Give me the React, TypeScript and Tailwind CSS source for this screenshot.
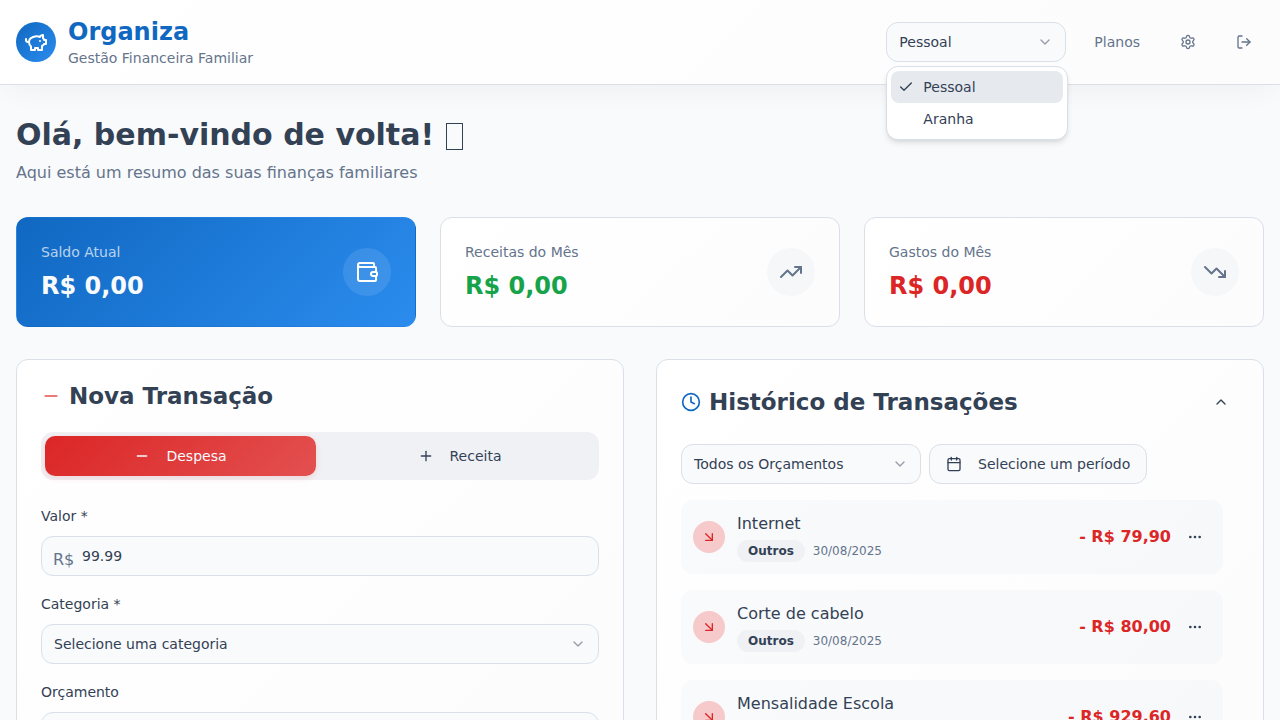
import { useState } from "react";
import type { ReactNode } from "react";
import {
  ArrowDownRight,
  Calendar,
  Check,
  ChevronDown,
  ChevronUp,
  Clock,
  Ellipsis,
  LogOut,
  Minus,
  Plus,
  Settings,
  TrendingDown,
  TrendingUp,
  Wallet,
} from "lucide-react";

const profiles = ["Pessoal", "Aranha"];

const transactions = [
  { title: "Internet", category: "Outros", date: "30/08/2025", amount: "- R$ 79,90" },
  { title: "Corte de cabelo", category: "Outros", date: "30/08/2025", amount: "- R$ 80,00" },
  { title: "Mensalidade Escola", category: "Outros", date: "30/08/2025", amount: "- R$ 929,60" },
];

const fieldClass =
  "h-10 w-full appearance-none rounded-xl border border-[#d9e0e8] bg-[#f9fafc] pl-3 pr-10 text-sm text-[#334155] outline-none";

const chevronClass = "pointer-events-none absolute top-3 right-[13px] size-4 text-[#334155] opacity-50";

function PiggyBankIcon() {
  return (
    <svg
      className="size-6"
      viewBox="0 0 24 24"
      fill="none"
      stroke="currentColor"
      strokeWidth="2"
      strokeLinecap="round"
      strokeLinejoin="round"
      aria-hidden="true"
    >
      <path d="M19 5c-1.5 0-2.8 1.4-3 2-3.5-1.5-11-.3-11 5 0 1.8 0 3 2 4.5V20h4v-2h3v2h4v-4c1-.5 1.7-1 2-2h2v-4h-2c0-1-.5-1.5-1-2V5z" />
      <path d="M2 9v1c0 1.1.9 2 2 2h1" />
      <path d="M16 11h.01" />
    </svg>
  );
}

function SelectField({ id, label, options }: { id: string; label?: string; options: string[] }) {
  return (
    <div className="relative">
      <select id={id} aria-label={label} className={fieldClass}>
        {options.map((option) => (
          <option key={option}>{option}</option>
        ))}
      </select>
      <ChevronDown className={chevronClass} />
    </div>
  );
}

function ProfileSelect() {
  const [open, setOpen] = useState(true);
  const [profile, setProfile] = useState(profiles[0]);
  return (
    <div className="relative w-[180px]">
      <select
        aria-label="Perfil"
        className={fieldClass}
        value={profile}
        onChange={(event) => setProfile(event.target.value)}
        onMouseDown={(event) => {
          event.preventDefault();
          setOpen(!open);
        }}
      >
        {profiles.map((name) => (
          <option key={name}>{name}</option>
        ))}
      </select>
      <ChevronDown className={chevronClass} />
      {open && (
        <div
          role="listbox"
          aria-label="Perfil"
          className="absolute top-11 left-0 z-20 w-[182px] rounded-xl border border-[#d9e0e8] bg-white p-1 shadow-md"
        >
          {profiles.map((name) => (
            <button
              key={name}
              type="button"
              role="option"
              aria-selected={name === profile}
              onClick={() => {
                setProfile(name);
                setOpen(false);
              }}
              className="flex h-8 w-full items-center gap-2.5 rounded-lg px-2 text-left text-sm text-[#334155] aria-selected:bg-[#e6e9ee]"
            >
              <span className="flex size-3.5 shrink-0 items-center justify-center">
                {name === profile && <Check className="size-4 shrink-0" />}
              </span>
              {name}
            </button>
          ))}
        </div>
      )}
    </div>
  );
}

function Header() {
  return (
    <header className="relative z-10 border-b border-[#d9e0e8] bg-linear-[135deg] from-white to-[#fcfcfd] shadow-[0_10px_30px_-10px_rgba(51,65,85,0.08)]">
      <div className="flex items-center justify-between p-4">
        <div className="flex items-center gap-3">
          <div className="flex size-10 items-center justify-center rounded-full bg-linear-[135deg] from-[#1068c1] to-[#2b8cee] text-white">
            <PiggyBankIcon />
          </div>
          <div>
            <p className="text-2xl font-bold text-[#1068c1]">Organiza</p>
            <p className="text-sm text-[#64748b]">Gestão Financeira Familiar</p>
          </div>
        </div>
        <nav className="flex items-center gap-4 text-[#64748b]">
          <ProfileSelect />
          <a href="#planos" className="px-3 text-sm">
            Planos
          </a>
          <button type="button" aria-label="Configurações" className="flex h-9 w-10 items-center justify-center">
            <Settings className="size-4" />
          </button>
          <button type="button" aria-label="Sair" className="flex h-9 w-10 items-center justify-center">
            <LogOut className="size-4" />
          </button>
        </nav>
      </div>
    </header>
  );
}

type SummaryProps = {
  label: string;
  value: string;
  icon: ReactNode;
  cardClass: string;
  labelClass: string;
  valueClass: string;
  iconClass: string;
};

const lightCard = "border-[#d9e0e8] bg-linear-[135deg] from-white to-[#fcfcfd]";

function SummaryCard({ label, value, icon, cardClass, labelClass, valueClass, iconClass }: SummaryProps) {
  return (
    <section className={`flex items-center justify-between rounded-xl border p-6 ${cardClass}`}>
      <div>
        <p className={`text-sm ${labelClass}`}>{label}</p>
        <p className={`mt-2 text-2xl font-bold ${valueClass}`}>{value}</p>
      </div>
      <div className={`flex size-12 items-center justify-center rounded-full ${iconClass}`}>{icon}</div>
    </section>
  );
}

function NewTransaction() {
  return (
    <section className={`rounded-xl border p-6 ${lightCard}`}>
      <h2 className="flex items-center gap-2 text-[23px] leading-6 font-bold">
        <Minus className="size-5 text-[#e14f4f]" />
        Nova Transação
      </h2>
      <div className="mt-6 grid grid-cols-2 gap-2 rounded-xl bg-[#f0f1f5] p-1 text-sm">
        <button
          type="button"
          className="flex h-10 items-center justify-center gap-4 rounded-[10px] bg-linear-[135deg] from-[#dc2626] to-[#e35050] text-[#f8fafc] shadow-[0_2px_6px_rgba(220,38,38,0.15)]"
        >
          <Minus className="size-4" />
          Despesa
        </button>
        <button type="button" className="flex h-10 items-center justify-center gap-4 rounded-[10px]">
          <Plus className="size-4" />
          Receita
        </button>
      </div>
      <form className="mt-6 flex flex-col gap-4">
        <div>
          <label htmlFor="valor" className="mb-2 block text-sm leading-6">
            Valor *
          </label>
          <div className="relative">
            <span className="absolute top-3 left-3 text-base text-[#64748b]">R$</span>
            <input
              id="valor"
              type="text"
              inputMode="decimal"
              placeholder="99.99"
              className="h-10 w-full rounded-xl border border-[#d9e0e8] bg-[#f9fafc] pr-3 pl-10 text-sm outline-none placeholder:text-[#334155]"
            />
          </div>
        </div>
        <div>
          <label htmlFor="categoria" className="mb-2 block text-sm leading-6">
            Categoria *
          </label>
          <SelectField id="categoria" options={["Selecione uma categoria", "Outros"]} />
        </div>
        <div>
          <label htmlFor="orcamento" className="mb-2 block text-sm leading-6">
            Orçamento
          </label>
          <SelectField id="orcamento" options={["Selecione um orçamento"]} />
        </div>
      </form>
    </section>
  );
}

function History() {
  return (
    <section className={`rounded-xl border p-6 ${lightCard}`}>
      <div className="flex items-center justify-between">
        <h2 className="flex items-center gap-2 text-[23px] leading-6 font-bold">
          <Clock className="size-5 text-[#1068c1]" />
          Histórico de Transações
        </h2>
        <button type="button" aria-label="Recolher histórico" className="flex size-9 items-center justify-center">
          <ChevronUp className="size-4" />
        </button>
      </div>
      <div className="mt-6 flex gap-2">
        <div className="w-60">
          <SelectField id="filtro-orcamento" label="Orçamentos" options={["Todos os Orçamentos"]} />
        </div>
        <button
          type="button"
          className="flex h-10 items-center gap-4 rounded-xl border border-[#d9e0e8] bg-[#f9fafc] px-4 text-sm"
        >
          <Calendar className="size-4" />
          Selecione um período
        </button>
      </div>
      <ul className="mt-4 flex flex-col gap-4 pr-4">
        {transactions.map((item) => (
          <li key={item.title} className="flex items-center gap-3 rounded-xl bg-linear-[135deg] from-[#f9fafc] to-[#f7f8fa] p-3">
            <div className="flex size-8 items-center justify-center rounded-full bg-[#f6c9cb] text-[#dc2626]">
              <ArrowDownRight className="size-4" />
            </div>
            <div className="flex flex-1 flex-col gap-1">
              <p>{item.title}</p>
              <div className="flex items-center gap-2 text-xs">
                <span className="rounded-full border border-transparent bg-[#f0f1f5] px-2.5 py-0.5 font-bold">
                  {item.category}
                </span>
                <span className="text-[#64748b]">{item.date}</span>
              </div>
            </div>
            <div className="flex items-center gap-2">
              <span className="font-bold text-[#dc2626]">{item.amount}</span>
              <button
                type="button"
                aria-label={`Opções de ${item.title}`}
                className="flex size-8 items-center justify-center"
              >
                <Ellipsis className="size-4" />
              </button>
            </div>
          </li>
        ))}
      </ul>
    </section>
  );
}

export default function App() {
  return (
    <div className="min-h-screen bg-[#f9fafc] font-['DejaVu_Sans',sans-serif] text-[#334155]">
      <Header />
      <main className="px-4 py-8">
        <h1 className="text-3xl font-bold">
          Olá, bem-vindo de volta!{" "}
          <span className="ml-px inline-block h-[27px] w-[17px] border border-[#334155] align-[-5px]" aria-hidden="true" />
        </h1>
        <p className="mt-2 text-[#64748b]">Aqui está um resumo das suas finanças familiares</p>
        <div className="mt-8 grid gap-6 md:grid-cols-3">
          <SummaryCard
            label="Saldo Atual"
            value="R$ 0,00"
            icon={<Wallet className="size-6" />}
            cardClass="border-transparent bg-linear-[135deg] from-[#1068c1] to-[#2b8cee]"
            labelClass="text-white/70"
            valueClass="text-[#f8fafc]"
            iconClass="bg-white/10 text-white"
          />
          <SummaryCard
            label="Receitas do Mês"
            value="R$ 0,00"
            icon={<TrendingUp className="size-6" />}
            cardClass={lightCard}
            labelClass="text-[#64748b]"
            valueClass="text-[#16a34a]"
            iconClass="bg-[#f5f7f9] text-[#64748b]"
          />
          <SummaryCard
            label="Gastos do Mês"
            value="R$ 0,00"
            icon={<TrendingDown className="size-6" />}
            cardClass={lightCard}
            labelClass="text-[#64748b]"
            valueClass="text-[#dc2626]"
            iconClass="bg-[#f5f7f9] text-[#64748b]"
          />
        </div>
        <div className="mt-8 grid gap-8 lg:grid-cols-2">
          <NewTransaction />
          <History />
        </div>
      </main>
    </div>
  );
}
